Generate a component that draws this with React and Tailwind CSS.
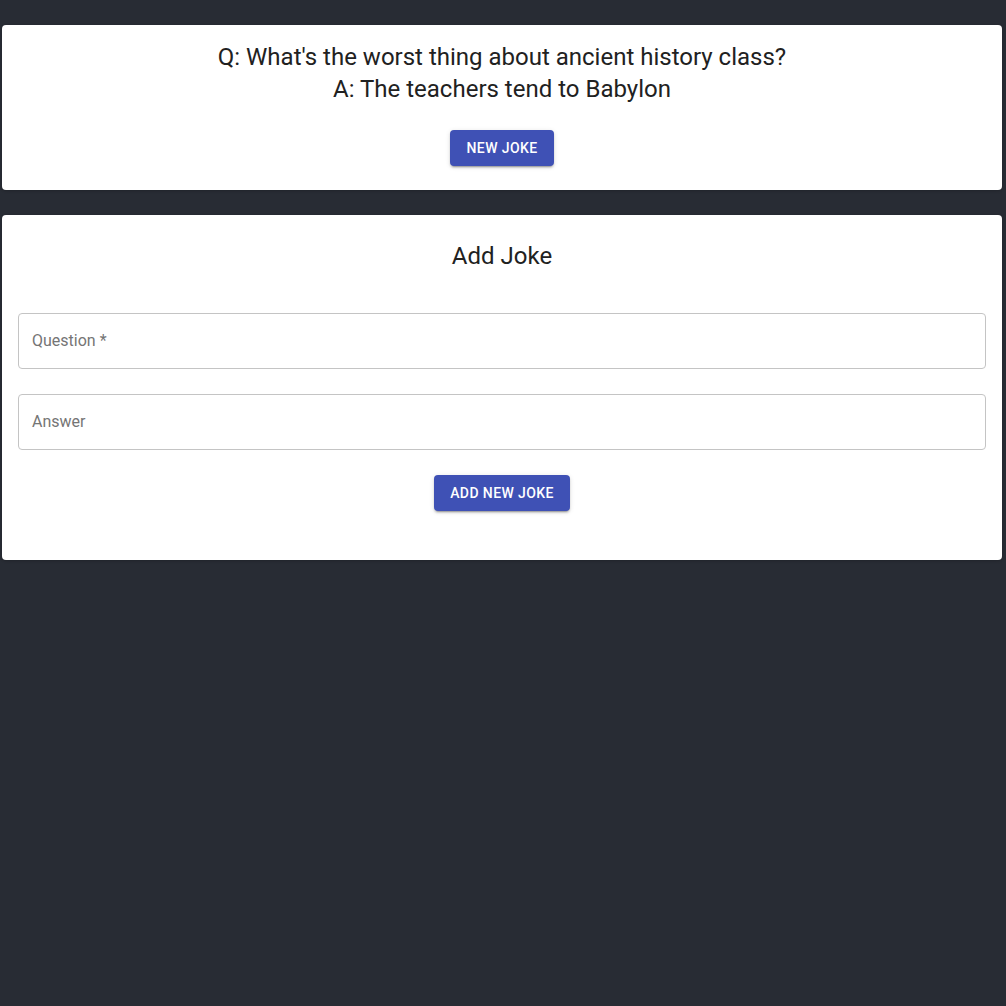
export default function App() {
  const font = { fontFamily: "Roboto, 'Helvetica Neue', Arial, sans-serif" };
  const btn =
    "bg-[#3f51b5] text-white text-[14px] font-medium tracking-[0.4px] uppercase h-[36px] px-4 rounded-[4px] shadow-[0_3px_1px_-2px_rgba(0,0,0,0.2),0_2px_2px_0_rgba(0,0,0,0.14),0_1px_5px_0_rgba(0,0,0,0.12)]";
  return (
    <div className="min-h-screen bg-[#282c34] pt-[25px] pl-[2px] pr-[4px] text-[#212121]" style={font}>
      <div className="bg-white rounded-[4px] pt-4 pb-6 flex flex-col items-center shadow-[0_1px_3px_rgba(0,0,0,0.2)]">
        <div className="text-[24px] leading-[32px] text-center">
          <div>Q: What's the worst thing about ancient history class?</div>
          <div>A: The teachers tend to Babylon</div>
        </div>
        <button className={btn + " mt-[25px]"}>New Joke</button>
      </div>
      <div className="bg-white rounded-[4px] mt-[25px] pt-[25px] pb-[49px] px-4 flex flex-col items-center shadow-[0_1px_3px_rgba(0,0,0,0.2)]">
        <div className="text-[24px] leading-[32px] text-center">Add Joke</div>
        <div className="w-full mt-[41px] h-[56px] border border-[#c4c4c4] rounded-[4px] flex items-center px-[13px] text-[16px] text-[#757575]">
          Question *
        </div>
        <div className="w-full mt-[25px] h-[56px] border border-[#c4c4c4] rounded-[4px] flex items-center px-[13px] text-[16px] text-[#757575]">
          Answer
        </div>
        <button className={btn + " mt-[25px]"}>Add New Joke</button>
      </div>
    </div>
  );
}
